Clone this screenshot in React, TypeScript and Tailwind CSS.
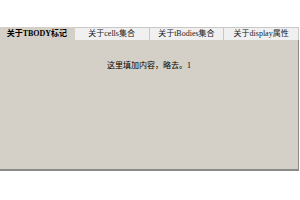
import React, { useState } from 'react';

const tabs = ['关于TBODY标记', '关于cells集合', '关于tBodies集合', '关于display属性'];

export default function App() {
  const [active, setActive] = useState(0);

  return (
    <div
      className="w-[300px] h-[200px] bg-white pt-[27px]"
      style={{ fontFamily: '"Liberation Serif", "Noto Sans CJK SC", serif' }}
    >
      <div className="w-[299px]">
        <div className="flex h-[13px]">
          {tabs.map((t, i) => (
            <button
              key={t}
              onClick={() => setActive(i)}
              className={
                'flex-1 flex items-center justify-center text-[8px] leading-none border-t border-r ' +
                (i === active
                  ? 'bg-[#d4d0c8] border-[#d4d0c8] font-bold text-black'
                  : 'bg-[#f0f0f0] border-[#c8c8c8] text-[#222]')
              }
            >
              {t}
            </button>
          ))}
        </div>
        <div className="h-[131px] bg-[#d4d0c8] border-b-2 border-r border-[#8a8a86] flex justify-center pt-[22px]">
          <p className="text-[8px] leading-none text-black">这里填加内容，略去。{active + 1}</p>
        </div>
      </div>
    </div>
  );
}
